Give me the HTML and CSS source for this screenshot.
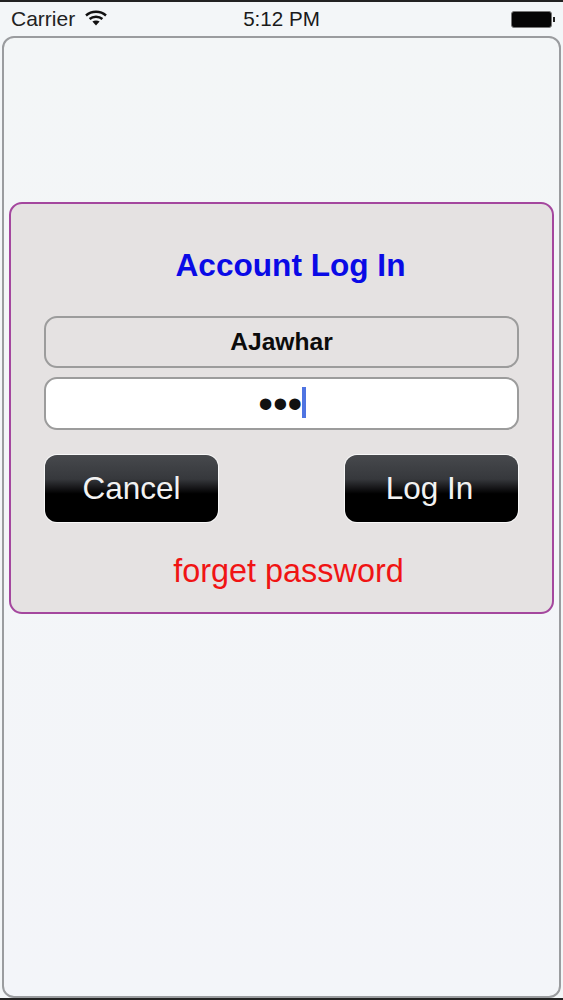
FILE: index.html
```html
<!DOCTYPE html>
<html lang="en">
<head>
  <meta charset="UTF-8">
  <meta name="viewport" content="width=device-width, initial-scale=1.0">
  <title>Account Log In</title>
  <link rel="stylesheet" href="styles.css">
</head>
<body>

  <div class="status-bar">
    <div class="status-left">
      <span>Carrier</span>
      <svg class="wifi" width="22" height="16" viewBox="0 0 22 16">
        <path d="M1 5.5 C6.5 0.5 15.5 0.5 21 5.5" fill="none" stroke="#111" stroke-width="2.4"/>
        <path d="M4.6 9 C8 6 14 6 17.4 9" fill="none" stroke="#111" stroke-width="2.4"/>
        <path d="M11 15.5 L7.4 11.6 C9.4 10 12.6 10 14.6 11.6 Z" fill="#111"/>
      </svg>
    </div>
    <div class="status-time">5:12 PM</div>
    <div class="battery">
      <div class="battery-body"></div>
      <div class="battery-tip"></div>
    </div>
  </div>

  <div class="screen">
    <div class="card">
      <h1 class="title">Account Log In</h1>

      <div class="field field-name">AJawhar</div>
      <div class="field field-password">
        <span class="dots">•••</span><span class="caret"></span>
      </div>

      <div class="buttons">
        <button class="btn">Cancel</button>
        <button class="btn btn-login">Log In</button>
      </div>

      <a class="forget" href="#">forget password</a>
    </div>
  </div>

</body>
</html>
```

FILE: styles.css
```css
html, body {
  height: 100%;
}
body {
  margin: 0;
  height: 1000px;
  box-sizing: border-box;
  display: flex;
  flex-direction: column;
  font-family: "Liberation Sans", Arial, sans-serif;
  background-color: #f3f6f8;
  border-top: 2px solid #222;
  border-bottom: 2px solid #222;
  overflow: hidden;
}

/* status bar */
.status-bar {
  height: 34px;
  flex-shrink: 0;
  display: flex;
  align-items: center;
  justify-content: space-between;
  padding: 0 6px 0 11px;
  position: relative;
  font-size: 21px;
  color: #222;
}
.status-left {
  display: flex;
  align-items: center;
  gap: 10px;
}
.wifi {
  margin-top: -3px;
}
.status-time {
  position: absolute;
  left: 0;
  right: 0;
  top: 5px;
  text-align: center;
  font-size: 20.6px;
  color: #1a1a1a;
}
.battery {
  display: flex;
  align-items: center;
  gap: 1px;
  margin-right: 2px;
}
.battery-body {
  width: 41px;
  height: 17px;
  background-color: #050505;
  border: 1px solid #777;
  border-radius: 3px;
  box-sizing: border-box;
}
.battery-tip {
  width: 2px;
  height: 5px;
  background-color: #222;
}

/* outer rounded box */
.screen {
  flex: 1;
  margin: 0 2px;
  padding: 164px 5px 0 5px;
  background: linear-gradient(to bottom, #f3f6f7, #f3f5f9);
  border: 2px solid #9a9c9f;
  border-radius: 12px;
}

.card {
  height: 412px;
  box-sizing: border-box;
  padding: 0 33px;
  background-color: #e5e2e2;
  border: 2px solid #a4479e;
  border-radius: 13px;
  display: flex;
  flex-direction: column;
}
.title {
  margin: 41px 0 31px 0;
  padding-left: 18px;
  font-size: 31.6px;
  line-height: 40px;
  font-weight: bold;
  text-align: center;
  color: #0a0ae6;
}

.field {
  height: 52px;
  box-sizing: border-box;
  border: 2px solid #9c9c9c;
  border-radius: 13px;
  display: flex;
  align-items: center;
  justify-content: center;
}
.field-name {
  font-size: 24.6px;
  font-weight: bold;
  color: #0c0c0c;
}
.field-password {
  margin-top: 9px;
  height: 53px;
  padding-left: 1px;
  background-color: #fff;
}
.dots {
  font-size: 42px;
  line-height: 40px;
  color: #111;
}
.caret {
  width: 3.5px;
  height: 31px;
  margin-top: -3px;
  background-color: #4f74e2;
}

.buttons {
  display: flex;
  justify-content: space-between;
  margin: 25px 1px 0 1px;
}
.btn {
  width: 173px;
  height: 67px;
  padding: 0;
  box-sizing: border-box;
  border: none;
  border-radius: 12px;
  color: #f2f2f2;
  font-family: inherit;
  font-size: 31.5px;
  background: linear-gradient(to bottom, #47494d 0%, #36383c 36%, #141416 50%, #000 58%, #000 100%);
  box-shadow: 0 0 0 1px #f8f8f8;
}
.btn-login {
  padding-right: 4px;
}

.forget {
  margin-top: 29px;
  padding-left: 14px;
  font-size: 32.4px;
  line-height: 40px;
  text-align: center;
  text-decoration: none;
  color: #f01414;
}
```
